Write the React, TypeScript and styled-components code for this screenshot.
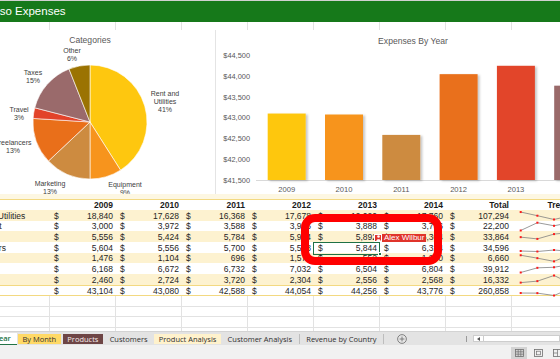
import React from "react";
import styled, { createGlobalStyle, css } from "styled-components";

const FONT = `"Liberation Sans", Arial, sans-serif`;
const UI_FONT = `"Open Sans", "Noto Sans", sans-serif`;
const COLS = "88px repeat(7, 66px) 94px";

const GlobalStyle = createGlobalStyle`
  *, *::before, *::after { box-sizing: border-box; }
  html, body { margin: 0; padding: 0; background: #ffffff; overflow: hidden; }
`;

const years = [2009, 2010, 2011, 2012, 2013, 2014];
const rows = [
  { label: "Rent and Utilities", values: [18840, 17628, 16368, 17678, 19020, 17760] },
  { label: "Equipment", values: [3000, 3972, 3588, 3996, 3888, 3756] },
  { label: "Marketing", values: [5556, 5424, 5784, 5904, 5892, 5304] },
  { label: "Freelancers", values: [5604, 5556, 5700, 5568, 5844, 6324] },
  { label: "Travel", values: [1476, 1104, 696, 1572, 552, 1260] },
  { label: "Taxes", values: [6168, 6672, 6732, 7032, 6504, 6804] },
  { label: "Other", values: [2460, 2724, 3720, 2304, 2556, 2568] },
];
const colTotals = years.map((_, i) => rows.reduce((s, r) => s + r.values[i], 0));
const fmt = (n: number) => n.toLocaleString("en-US");

const slices = [
  { name: "Rent and Utilities", pct: 41, color: "#fec70f" },
  { name: "Equipment", pct: 9, color: "#f7941d" },
  { name: "Marketing", pct: 13, color: "#cd8b40" },
  { name: "Freelancers", pct: 13, color: "#e96f1a" },
  { name: "Travel", pct: 3, color: "#e2432a" },
  { name: "Taxes", pct: 15, color: "#9a6a6b" },
  { name: "Other", pct: 6, color: "#9b7302" },
];
const barColors = ["#fec70f", "#f7941d", "#cd8b40", "#e96f1a", "#e2452a", "#9a6a6b"];

/* ---------- layout ---------- */

const Viewport = styled.div`
  position: relative;
  width: 560px;
  height: 359px;
  overflow: hidden;
  display: flex;
  flex-direction: column;
  background: #ffffff;
  font-family: ${FONT};
  color: #262626;
`;

const Sheet = styled.div`
  flex: 1;
  min-height: 0;
  width: 650px;
  margin-left: -38px;
  display: flex;
  flex-direction: column;
  overflow: hidden;
  border-top: 1px solid #d0d0d0;
`;

const TitleBar = styled.div`
  flex: none;
  height: 21px;
  background: #16791a;
  color: #ffffff;
  font-size: 11.5px;
  line-height: 21px;
  padding-left: 7px;
  white-space: nowrap;
`;

const GridRow = styled.div<{ $h: number; $line?: boolean }>`
  flex: none;
  display: grid;
  grid-template-columns: ${COLS};
  height: ${(p) => p.$h}px;
  border-bottom: ${(p) => (p.$line ? "1px solid #e2e2e2" : "none")};
`;

const GridCell = styled.div`
  border-right: 1px solid #e2e2e2;
`;

const ChartsRow = styled.div`
  flex: none;
  height: 164px;
  display: flex;
  gap: 8px;
`;

const PiePanel = styled.div`
  flex: none;
  width: 245px;
  height: 100%;
  background: #ffffff;
`;

const BarPanel = styled.div`
  flex: 1;
  height: 100%;
  background: #ffffff;
  border-left: 1px solid #e4e4e4;
  overflow: hidden;
`;

const ChartSvg = styled.svg`
  display: block;
  overflow: visible;
  font-family: ${FONT};
`;

const ChartTitle = styled.text`
  font-size: 8.6px;
  fill: #595959;
`;

const ChartLabel = styled.text<{ $size?: number }>`
  font-size: ${(p) => p.$size ?? 7}px;
  fill: #404040;
`;

const Strip = styled.div`
  flex: none;
  height: 5px;
  background: #fdf7e2;
`;

const TableWrap = styled.div`
  position: relative;
  flex: none;
`;

const TRow = styled.div<{ $kind: "head" | "body" | "total"; $band?: boolean }>`
  display: grid;
  grid-template-columns: ${COLS};
  align-items: center;
  font-size: 8.5px;
  white-space: nowrap;
  height: ${(p) => (p.$kind === "body" ? "10.7px" : "11px")};
  background: ${(p) => (p.$band ? "#fdf2d0" : "#ffffff")};
  ${(p) =>
    p.$kind === "head" &&
    css`
      border-top: 1px solid #f3d981;
      color: #1a1a1a;
      font-weight: 700;
    `}
  ${(p) =>
    p.$kind === "total" &&
    css`
      border-top: 1px solid #f3d981;
      border-bottom: 1px solid #f3d981;
    `}
`;

const LabelCell = styled.div`
  padding-left: 0;
  text-indent: -1px;
  overflow: hidden;
`;

const HeadCell = styled.div<{ $center?: boolean }>`
  text-align: ${(p) => (p.$center ? "center" : "right")};
  padding-right: ${(p) => (p.$center ? "0" : "3px")};
`;

const Money = styled.div<{ $selected?: boolean }>`
  position: relative;
  height: 100%;
  display: flex;
  align-items: center;
  justify-content: space-between;
  padding: 0 3px 0 4px;
  ${(p) =>
    p.$selected &&
    css`
      background: #ffffff;
      &::before {
        content: "";
        position: absolute;
        left: -1px;
        right: 0;
        top: -0.5px;
        bottom: -1.5px;
        border: 1.5px solid #1e7145;
      }
      &::after {
        content: "";
        position: absolute;
        right: -2px;
        bottom: -3px;
        width: 4px;
        height: 4px;
        background: #1e7145;
        border: 1px solid #ffffff;
      }
    `}
`;

const TrendCell = styled.div`
  height: 100%;
`;

const Flag = styled.div`
  position: absolute;
  left: 60px;
  top: -8px;
  height: 8px;
  display: flex;
  align-items: stretch;
  background: #e0342b;
  color: #ffffff;
  font-size: 8px;
  line-height: 8px;
  font-weight: 400;
  z-index: 3;
`;

const FlagIcon = styled.span`
  width: 8px;
  height: 8px;
  border: 1px solid #ffffff;
  display: flex;
  align-items: center;
  justify-content: center;
`;

const FlagText = styled.span`
  padding: 0 2px 0 2px;
`;

const Annotation = styled.div`
  position: absolute;
  left: 339px;
  top: 15px;
  width: 141px;
  height: 51px;
  border: 8.5px solid #ff0000;
  border-radius: 14px;
  pointer-events: none;
  z-index: 4;
`;

const EmptyArea = styled.div`
  flex: 1;
  min-height: 0;
  overflow: hidden;
`;

/* ---------- tabs & status ---------- */

type TabKind = "active" | "yellow" | "brown" | "cream" | "plain";

const TabBar = styled.div`
  flex: none;
  height: 14px;
  background: #e3e3e3;
  border-top: 1px solid #d3d3d3;
  display: flex;
  align-items: center;
  font-family: ${UI_FONT};
  font-size: 7.5px;
  white-space: nowrap;
  overflow: hidden;
`;

const TabList = styled.div`
  flex: none;
  display: flex;
  align-items: center;
  gap: 2px;
  margin-left: -21px;
  height: 100%;
`;

const Tab = styled.div<{ $kind: TabKind; $sep?: boolean }>`
  position: relative;
  flex: none;
  height: 10px;
  line-height: 10px;
  padding: 0 4.6px;
  color: #303030;
  ${(p) =>
    p.$kind === "active" &&
    css`
      height: 12px;
      line-height: 11px;
      margin-top: 1px;
      margin-right: -1px;
      padding-right: 6px;
      background: #ffffff;
      color: #217346;
      font-weight: 600;
      border-bottom: 1.5px solid #217346;
    `}
  ${(p) => p.$kind === "yellow" && css`background: #ffd966;`}
  ${(p) => p.$kind === "brown" && css`background: #6e4545; color: #f5ecec;`}
  ${(p) => p.$kind === "cream" && css`background: #fff2cc;`}
  ${(p) =>
    p.$sep &&
    css`
      margin-right: 3px;
      &::after {
        content: "";
        position: absolute;
        right: -3px;
        top: 0;
        bottom: 0;
        width: 1px;
        background: #bdbdbd;
      }
    `}
`;

const AddButton = styled.div`
  flex: none;
  margin-left: 13px;
  width: 10px;
  height: 10px;
  display: flex;
`;

const Spacer = styled.div`
  flex: 1;
`;

const Splitter = styled.div`
  flex: none;
  width: 3px;
  height: 6px;
  margin-right: 5px;
  background: radial-gradient(circle, #9a9a9a 0.6px, transparent 0.8px) 0 0 / 3px 2px repeat-y;
`;

const ScrollBar = styled.div`
  flex: none;
  width: 87px;
  height: 7px;
  display: flex;
  background: #ffffff;
  border: 1px solid #cdcdcd;
`;

const ScrollBtn = styled.div`
  flex: none;
  width: 10px;
  height: 100%;
  border-right: 1px solid #cdcdcd;
  display: flex;
  align-items: center;
  justify-content: center;
`;

const StatusBar = styled.div`
  flex: none;
  height: 14px;
  background: #f1f1f1;
  display: flex;
  justify-content: flex-end;
  align-items: flex-end;
  overflow: hidden;
`;

const ViewButtons = styled.div`
  flex: none;
  display: flex;
  gap: 3px;
  margin-right: -5px;
`;

const ViewBtn = styled.div<{ $on?: boolean }>`
  width: 16px;
  height: 12px;
  display: flex;
  align-items: center;
  justify-content: center;
  background: ${(p) => (p.$on ? "#d3d3d3" : "transparent")};
`;

/* ---------- charts ---------- */

function slicePath(cx: number, cy: number, r: number, f0: number, f1: number) {
  const a0 = f0 * 2 * Math.PI - Math.PI / 2;
  const a1 = f1 * 2 * Math.PI - Math.PI / 2;
  const x0 = cx + r * Math.cos(a0);
  const y0 = cy + r * Math.sin(a0);
  const x1 = cx + r * Math.cos(a1);
  const y1 = cy + r * Math.sin(a1);
  const large = f1 - f0 > 0.5 ? 1 : 0;
  return `M${cx},${cy} L${x0.toFixed(2)},${y0.toFixed(2)} A${r},${r} 0 ${large} 1 ${x1.toFixed(2)},${y1.toFixed(2)} Z`;
}

const pieLabels: { lines: string[]; x: number; y: number }[] = [
  { lines: ["Other", "6%"], x: 110, y: 22.5 },
  { lines: ["Taxes", "15%"], x: 71, y: 44.5 },
  { lines: ["Travel", "3%"], x: 57, y: 81.5 },
  { lines: ["Freelancers", "13%"], x: 51, y: 114.5 },
  { lines: ["Marketing", "13%"], x: 88, y: 155.5 },
  { lines: ["Equipment", "9%"], x: 163, y: 156.5 },
  { lines: ["Rent and", "Utilities", "41%"], x: 203, y: 65.5 },
];

function PieChart() {
  let acc = 0;
  return (
    <ChartSvg width={245} height={164} viewBox="0 0 245 164">
      <ChartTitle x={128} y={13} textAnchor="middle">Categories</ChartTitle>
      {slices.map((s) => {
        const f0 = acc / 100;
        acc += s.pct;
        const f1 = acc / 100;
        return (
          <path key={s.name} d={slicePath(128, 92, 57, f0, f1)} fill={s.color} stroke="#ffffff" strokeWidth={0.6} />
        );
      })}
      {pieLabels.map((l) => (
        <ChartLabel key={l.lines[0]} x={l.x} y={l.y} textAnchor="middle">
          {l.lines.map((t, i) => (
            <tspan key={t} x={l.x} dy={i === 0 ? 0 : 8.3}>
              {t}
            </tspan>
          ))}
        </ChartLabel>
      ))}
    </ChartSvg>
  );
}

function BarChart() {
  const axis = [44500, 44000, 43500, 43000, 42500, 42000, 41500];
  const yOf = (v: number) => 150 - ((v - 41500) / 500) * 20.72;
  return (
    <ChartSvg width={400} height={164} viewBox="0 0 400 164">
      <defs>
        <filter id="barShadow" x="-20%" y="-10%" width="150%" height="130%">
          <feDropShadow dx="2" dy="1" stdDeviation="1.2" floodColor="#000000" floodOpacity="0.22" />
        </filter>
      </defs>
      <ChartTitle x={197} y={14} textAnchor="middle">Expenses By Year</ChartTitle>
      {axis.map((v, i) => (
        <ChartLabel key={v} $size={7.4} x={34} y={25.7 + i * 20.72 + 2.6} textAnchor="end" style={{ fill: "#595959" }}>
          ${fmt(v)}
        </ChartLabel>
      ))}
      <line x1={40} x2={400} y1={150.5} y2={150.5} stroke="#d9d9d9" strokeWidth={1} />
      {colTotals.map((v, i) => {
        const x = 51.7 + i * 57.3;
        const y = yOf(v);
        return (
          <g key={years[i]}>
            <rect x={x} y={y} width={38} height={150 - y} fill={barColors[i]} filter="url(#barShadow)" />
            <ChartLabel $size={7.6} x={x + 19} y={161.7} textAnchor="middle" style={{ fill: "#595959" }}>
              {years[i]}
            </ChartLabel>
          </g>
        );
      })}
    </ChartSvg>
  );
}

function Spark({ values }: { values: number[] }) {
  const max = Math.max(...values);
  const min = Math.min(...values);
  const pts = values.map((v, i) => [8.7 + i * 16.67, 1.5 + ((max - v) / (max - min || 1)) * 8]);
  return (
    <ChartSvg width={100} height={11} viewBox="0 0 100 11">
      <polyline points={pts.map((p) => p.join(",")).join(" ")} fill="none" stroke="#808080" strokeWidth={0.8} />
      {pts.map((p, i) => (
        <rect key={i} x={p[0] - 1} y={p[1] - 1} width={2} height={2} fill="#ff1a1a" />
      ))}
    </ChartSvg>
  );
}

function EmptyCells() {
  return (
    <>
      {Array.from({ length: 9 }).map((_, i) => (
        <GridCell key={i} />
      ))}
    </>
  );
}

function PersonIcon() {
  return (
    <svg width="5" height="6" viewBox="0 0 5 6">
      <circle cx="2.5" cy="1.5" r="1.3" fill="#ffffff" />
      <path d="M0.3 6 C0.3 3.6 4.7 3.6 4.7 6 Z" fill="#ffffff" />
    </svg>
  );
}

export default function App() {
  return (
    <>
      <GlobalStyle />
      <Viewport>
        <Sheet>
          <TitleBar>Contoso Expenses</TitleBar>
          <GridRow $h={8}>
            <EmptyCells />
          </GridRow>
          <ChartsRow>
            <PiePanel>
              <PieChart />
            </PiePanel>
            <BarPanel>
              <BarChart />
            </BarPanel>
          </ChartsRow>
          <Strip />
          <TableWrap>
            <TRow $kind="head">
              <LabelCell />
              {years.map((y) => (
                <HeadCell key={y}>{y}</HeadCell>
              ))}
              <HeadCell>Total</HeadCell>
              <HeadCell $center>Trend</HeadCell>
            </TRow>
            {rows.map((r, ri) => (
              <TRow key={r.label} $kind="body" $band={ri % 2 === 0}>
                <LabelCell>{r.label}</LabelCell>
                {r.values.map((v, ci) => {
                  const selected = ri === 3 && ci === 4;
                  return (
                    <Money key={ci} $selected={selected}>
                      <span>$</span>
                      <span>{fmt(v)}</span>
                      {selected && (
                        <Flag>
                          <FlagIcon>
                            <PersonIcon />
                          </FlagIcon>
                          <FlagText>Alex Wilbur</FlagText>
                        </Flag>
                      )}
                    </Money>
                  );
                })}
                <Money>
                  <span>$</span>
                  <span>{fmt(r.values.reduce((a, b) => a + b, 0))}</span>
                </Money>
                <TrendCell>
                  <Spark values={r.values} />
                </TrendCell>
              </TRow>
            ))}
            <TRow $kind="total">
              <LabelCell>Total</LabelCell>
              {colTotals.map((v, i) => (
                <Money key={i}>
                  <span>$</span>
                  <span>{fmt(v)}</span>
                </Money>
              ))}
              <Money>
                <span>$</span>
                <span>{fmt(colTotals.reduce((a, b) => a + b, 0))}</span>
              </Money>
              <TrendCell>
                <Spark values={colTotals} />
              </TrendCell>
            </TRow>
            <Annotation />
          </TableWrap>
          <EmptyArea>
            {[0, 1, 2, 3].map((i) => (
              <GridRow key={i} $h={10.7} $line>
                <EmptyCells />
              </GridRow>
            ))}
          </EmptyArea>
        </Sheet>
        <TabBar>
          <TabList>
            <Tab $kind="active">By Year</Tab>
            <Tab $kind="yellow">By Month</Tab>
            <Tab $kind="brown">Products</Tab>
            <Tab $kind="plain">Customers</Tab>
            <Tab $kind="cream">Product Analysis</Tab>
            <Tab $kind="plain" $sep>Customer Analysis</Tab>
            <Tab $kind="plain" $sep>Revenue by Country</Tab>
          </TabList>
          <AddButton>
            <svg width="10" height="10" viewBox="0 0 10 10">
              <circle cx="5" cy="5" r="4.4" fill="none" stroke="#6a6a6a" strokeWidth="0.8" />
              <path d="M5 2.6 V7.4 M2.6 5 H7.4" stroke="#6a6a6a" strokeWidth="0.8" />
            </svg>
          </AddButton>
          <Spacer />
          <Splitter />
          <ScrollBar>
            <ScrollBtn>
              <svg width="3" height="4" viewBox="0 0 3 4">
                <path d="M3 0 L0 2 L3 4 Z" fill="#555555" />
              </svg>
            </ScrollBtn>
          </ScrollBar>
        </TabBar>
        <StatusBar>
          <ViewButtons>
            <ViewBtn $on>
              <svg width="9" height="8" viewBox="0 0 9 8">
                <rect x="0.5" y="0.5" width="8" height="7" fill="none" stroke="#6f6f6f" strokeWidth="0.8" />
                <path d="M3.2 0.5 V7.5 M5.8 0.5 V7.5 M0.5 2.8 H8.5 M0.5 5.2 H8.5" stroke="#6f6f6f" strokeWidth="0.7" />
              </svg>
            </ViewBtn>
            <ViewBtn>
              <svg width="9" height="8" viewBox="0 0 9 8">
                <rect x="0.5" y="0.5" width="8" height="7" fill="none" stroke="#6f6f6f" strokeWidth="0.8" />
                <rect x="2.5" y="2.2" width="4" height="3.6" fill="none" stroke="#6f6f6f" strokeWidth="0.7" />
              </svg>
            </ViewBtn>
            <ViewBtn>
              <svg width="9" height="8" viewBox="0 0 9 8">
                <rect x="0.5" y="0.5" width="8" height="7" fill="none" stroke="#6f6f6f" strokeWidth="0.8" />
                <path d="M4.5 0.5 V7.5 M0.5 4 H4.5" stroke="#6f6f6f" strokeWidth="0.7" />
              </svg>
            </ViewBtn>
          </ViewButtons>
        </StatusBar>
      </Viewport>
    </>
  );
}
